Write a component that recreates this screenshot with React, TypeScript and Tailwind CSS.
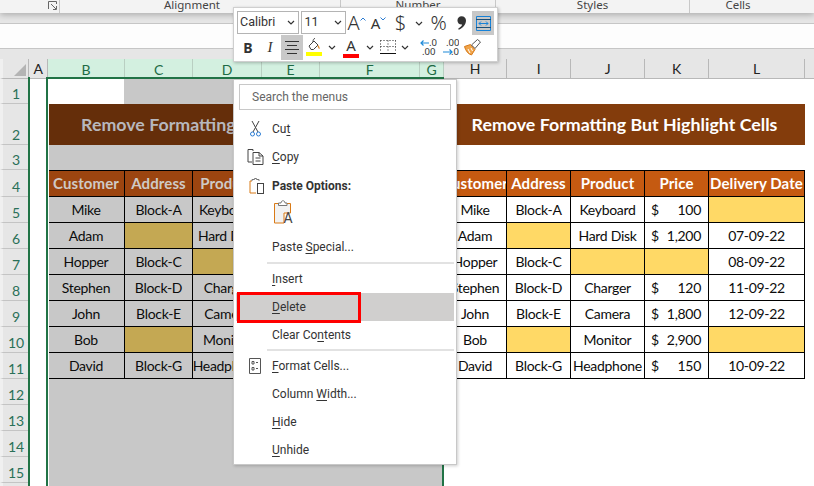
import type { ReactNode } from 'react';

const columns = ['B', 'C', 'D', 'E', 'F', 'G'];
const rightColumns = ['H', 'I', 'J', 'K', 'L'];
const rowNumbers = Array.from({ length: 16 }, (_, i) => i + 1);
const headers = ['Customer', 'Address', 'Product', 'Price', 'Delivery Date'];
const data = [
  ['Mike', 'Block-A', 'Keyboard', '100', ''],
  ['Adam', '', 'Hard Disk', '1,200', '07-09-22'],
  ['Hopper', 'Block-C', '', '', '08-09-22'],
  ['Stephen', 'Block-D', 'Charger', '120', '11-09-22'],
  ['John', 'Block-E', 'Camera', '1,800', '12-09-22'],
  ['Bob', '', 'Monitor', '2,900', ''],
  ['David', 'Block-G', 'Headphone', '150', '10-09-22'],
];

function Launcher() {
  return (
    <svg width="9" height="9" viewBox="0 0 9 9" fill="none" stroke="#666" strokeWidth="1" className="shrink-0">
      <path d="M0.5 8V0.5H8.5V3M5 8.5H8.5V5M3 3L8 8" />
    </svg>
  );
}

function Ribbon() {
  return (
    <div className="relative z-10 flex h-[13px] shrink-0 overflow-hidden bg-[#f3f3f3] text-[11.5px] leading-[10px] text-[#444] shadow-[0_2px_6px_rgba(0,0,0,0.25)]">
      <div className="flex w-[60px] items-start justify-end gap-[3px] border-r border-[#c8c8c8] pr-[2px] pt-px">
        <Launcher />
      </div>
      <div className="flex w-[281px] justify-center border-r border-[#c8c8c8] pr-[16px]">Alignment</div>
      <div className="flex w-[155px] justify-center border-r border-[#c8c8c8]">Number</div>
      <div className="flex w-[194px] justify-center border-r border-[#c8c8c8]">Styles</div>
      <div className="flex flex-1 justify-center pr-[28px]">Cells</div>
    </div>
  );
}

function Cell({ children, dim, fill, head, className = '' }: { children?: ReactNode; dim?: boolean; fill?: boolean; head?: boolean; className?: string }) {
  let bg = dim ? 'bg-[#c8c8c8] text-[#0c0c0c]' : 'bg-white text-[#0c0c0c]';
  if (fill) bg = dim ? 'bg-[#c4a853]' : 'bg-[#ffd966]';
  if (head) bg = dim ? 'bg-[#9c4510] text-[#cfcac6] font-bold text-[15px] tracking-[0.1px]' : 'bg-[#c55a11] text-white font-bold text-[15px] tracking-[0.1px]';
  return (
    <div className={`flex items-center justify-center overflow-hidden whitespace-nowrap border-b border-r border-black ${bg} ${className}`}>
      {children}
    </div>
  );
}

function TableHead({ dim }: { dim?: boolean }) {
  return (
    <>
      {headers.map((h) => (
        <Cell key={h} head dim={dim} className="border-t">
          {h}
        </Cell>
      ))}
    </>
  );
}

function TableRow({ row, dim }: { row: string[]; dim?: boolean }) {
  return (
    <>
      {row.map((value, i) =>
        i === 3 && value ? (
          <Cell key={i} dim={dim} className="!justify-between pl-[6px] pr-[7px]">
            <span>$</span>
            <span>{value}</span>
          </Cell>
        ) : (
          <Cell key={i} dim={dim} fill={!value}>
            {value}
          </Cell>
        ),
      )}
    </>
  );
}

function Sheet() {
  return (
    <div className="grid grid-cols-[29px_19px_77px_68px_69px_58px_100px_24px_63px_64px_74px_64px_96px_9px] grid-rows-[20px_25px_41px_25px_27px_repeat(12,26px)] font-['Lato',sans-serif] text-[14px] tracking-[-0.3px]">
      {/* Column headers */}
      <div className="relative border-b border-r border-[#b8b8b8] border-l-[3px] border-l-[#f0f0f0] bg-[#e6e6e6]">
        <svg width="12" height="12" viewBox="0 0 12 12" className="absolute left-[11px] top-[5px]">
          <path d="M12 0V12H0Z" fill="#b4b4b4" />
        </svg>
      </div>
      <div className="flex items-center justify-center border-b border-r border-[#b8b8b8] bg-[#e6e6e6] text-[14px] text-[#222]">A</div>
      {columns.map((c) => (
        <div key={c} className="flex items-center justify-center border-r border-[#b9cfc2] bg-[#d3f0e0] text-[14px] text-[#1d6b45]">
          {c}
        </div>
      ))}
      {rightColumns.map((c) => (
        <div key={c} className="flex items-center justify-center border-b border-r border-[#b8b8b8] bg-[#e6e6e6] text-[14px] text-[#222]">
          {c}
        </div>
      ))}
      <div className="border-b border-[#b8b8b8] bg-[#e6e6e6]" />

      {rowNumbers.map((n) => {
        const row = data[n - 5];
        return (
          <div key={n} className="contents">
            <div className="flex items-end justify-center border-b border-[#c4c4c4] border-l-[3px] border-l-[#f0f0f0] bg-[#e6e6e6] text-[14px] leading-[18px] tracking-normal text-[#2a7058]">
              {n}
            </div>
            <div className="bg-white" />
            {n === 1 && (
              <>
                <div className="border-r border-[#c8c8c8] bg-white" />
                <div className="col-span-5 bg-[#c8c8c8]" />
                <div className="col-span-5 bg-white" />
              </>
            )}
            {n === 2 && (
              <>
                <div className="col-span-5 flex items-center justify-center whitespace-nowrap bg-[#652e0a] text-[17.8px] font-bold tracking-normal text-[#b7b7bd]">
                  Remove Formatting But Highlight Cells
                </div>
                <div className="bg-[#c8c8c8]" />
                <div className="col-span-5 flex items-center justify-center whitespace-nowrap bg-[#833c0c] text-[17.8px] font-bold tracking-normal text-white">
                  Remove Formatting But Highlight Cells
                </div>
              </>
            )}
            {n === 3 && (
              <>
                <div className="col-span-6 bg-[#c8c8c8]" />
                <div className="col-span-5 bg-white" />
              </>
            )}
            {n === 4 && (
              <>
                <TableHead dim />
                <div className="bg-[#c8c8c8]" />
                <TableHead />
              </>
            )}
            {row && (
              <>
                <TableRow row={row} dim />
                <div className="bg-[#c8c8c8]" />
                <TableRow row={row} />
              </>
            )}
            {n > 11 && (
              <>
                <div className="col-span-6 bg-[#c8c8c8]" />
                <div className="col-span-5 bg-white" />
              </>
            )}
            <div className="bg-white" />
          </div>
        );
      })}
    </div>
  );
}

function Chevron() {
  return (
    <svg width="8" height="5" viewBox="0 0 8 5" fill="none" stroke="#333" strokeWidth="1.2" className="shrink-0">
      <path d="M1 1L4 4L7 1" />
    </svg>
  );
}

function Tool({ className, children }: { className: string; children?: ReactNode }) {
  return <div className={`flex h-full shrink-0 items-center justify-center ${className}`}>{children}</div>;
}

function MiniToolbar() {
  return (
    <div className="absolute left-[233px] top-[7px] z-30 h-[55px] w-[265px] border border-[#cfcfcf] bg-white p-[3px] text-[#333] shadow-[1px_1px_3px_rgba(0,0,0,0.25)]">
      <div className="flex h-[24px]">
        <div className="flex h-[23px] w-[63px] items-center justify-between border border-[#b4b4b4] pl-[2px] pr-[3px] font-['Roboto',sans-serif] text-[12.5px]">
          Calibri
          <Chevron />
        </div>
        <div className="ml-[2px] flex h-[23px] w-[45px] items-center justify-between border border-[#b4b4b4] pl-[2px] pr-[3px] font-['Roboto',sans-serif] text-[12.5px]">
          11
          <Chevron />
        </div>
        <Tool className="w-[21px] text-[20px] font-light">
          A
          <svg width="6" height="4" viewBox="0 0 6 4" fill="none" stroke="#2b7cd3" strokeWidth="1" className="mb-[9px]">
            <path d="M0.5 3.5L3 1L5.5 3.5" />
          </svg>
        </Tool>
        <Tool className="w-[23px] text-[15px]">
          A
          <svg width="6" height="4" viewBox="0 0 6 4" fill="none" stroke="#2b7cd3" strokeWidth="1" className="mb-[8px]">
            <path d="M0.5 0.5L3 3L5.5 0.5" />
          </svg>
        </Tool>
        <Tool className="w-[21px] text-[20px] font-light">$</Tool>
        <Tool className="w-[15px]">
          <Chevron />
        </Tool>
        <Tool className="w-[25px] text-[20px] font-light">%</Tool>
        <Tool className="w-[21px]">
          <svg width="9" height="14" viewBox="0 0 8 12" fill="#333">
            <path d="M4 0C6.4 0 8 1.6 8 3.8C8 7 5.6 10.4 1.6 12L1 11C3.2 9.8 4.4 8.6 4.6 7.4C2 7.6 0.4 6 0.4 3.8C0.4 1.6 2 0 4 0Z" />
          </svg>
        </Tool>
        <Tool className="h-[24px] w-[22px] bg-[#c8c8c8]">
          <svg width="15" height="15" viewBox="0 0 15 15" fill="none" stroke="#1782d8" strokeWidth="1">
            <path d="M0.5 0.5H14.5V14.5H0.5Z" />
            <path d="M0 3.5H15M0 11.5H15" stroke="#1a4f7a" />
            <path d="M3 7.5H12M5 5.5L3 7.5L5 9.5M10 5.5L12 7.5L10 9.5" />
          </svg>
        </Tool>
      </div>
      <div className="flex h-[25px]">
        <Tool className="w-[22px] text-[14px] font-bold">B</Tool>
        <Tool className="w-[22px] font-['Liberation_Serif',serif] text-[15px] italic">I</Tool>
        <Tool className="w-[22px] bg-[#c8c8c8]">
          <svg width="14" height="13" viewBox="0 0 14 13" fill="none" stroke="#333" strokeWidth="1">
            <path d="M0 0.5H14M2 4.5H12M0 8.5H14M2 12.5H12" />
          </svg>
        </Tool>
        <Tool className="w-[22px]">
          <svg width="16" height="19" viewBox="0 0 16 19">
            <path d="M3 8L8 3L12 7L7.5 11.5H5Z" fill="none" stroke="#444" />
            <path d="M9 0.5C7.5 0.5 7 2 7 4" fill="none" stroke="#444" />
            <path d="M12 7C13.5 8.5 14 10 13.5 11C12.5 11 12 9.5 11.5 8Z" fill="#e08a2c" />
            <rect x="0" y="14" width="16" height="4" fill="#ffff00" />
          </svg>
        </Tool>
        <Tool className="w-[13px]">
          <Chevron />
        </Tool>
        <Tool className="w-[26px]">
          <div className="flex flex-col items-center text-[15px] leading-[15px]">
            A<div className="mt-px h-[4px] w-[16px] bg-[#ff0000]" />
          </div>
        </Tool>
        <Tool className="w-[11px]">
          <Chevron />
        </Tool>
        <Tool className="w-[26px]">
          <svg width="16" height="15" viewBox="0 0 16 15" fill="none" stroke="#222" strokeWidth="1" strokeDasharray="1 2">
            <path d="M0.5 0.5H16M0.5 6.5H16M0.5 0.5V12M8 0.5V12M15.5 0.5V12" />
            <path d="M0 13.5H16" stroke="#111" strokeDasharray="none" />
          </svg>
        </Tool>
        <Tool className="w-[8px]">
          <Chevron />
        </Tool>
        <Tool className="ml-[8px] w-[22px]">
          <svg width="17" height="17" viewBox="0 0 17 17" fill="none" stroke="#1f8ad8" strokeWidth="1.2">
            <path d="M9 4H1M3.5 1.5L1 4L3.5 6.5" />
            <text x="9" y="7" fontSize="9.5" fill="#333" stroke="none">.0</text>
            <text x="2" y="16" fontSize="9.5" fill="#333" stroke="none">.00</text>
          </svg>
        </Tool>
        <Tool className="w-[22px]">
          <svg width="17" height="17" viewBox="0 0 17 17" fill="none" stroke="#1f8ad8" strokeWidth="1.2">
            <path d="M1 13H10M7.5 10.5L10 13L7.5 15.5" />
            <text x="4" y="7" fontSize="9.5" fill="#333" stroke="none">.00</text>
            <text x="9" y="16" fontSize="9.5" fill="#333" stroke="none">.0</text>
          </svg>
        </Tool>
        <Tool className="w-[22px]">
          <svg width="17" height="17" viewBox="0 0 17 17">
            <path d="M0.5 7.5L6.5 5.5L11 10.5L7.5 16C4 15 1.5 11.5 0.5 7.5Z" fill="#f0a44a" stroke="#d77a1a" />
            <path d="M4 10L6 14M7 9L8.5 12" stroke="#fff" fill="none" />
            <path d="M7.5 6L13.5 0.5L16.5 3L11 9.5Z" fill="#fff" stroke="#555" />
          </svg>
        </Tool>
      </div>
    </div>
  );
}

function MenuItem({ pre = '', mark, post = '', icon, hover }: { pre?: string; mark: string; post?: string; icon?: ReactNode; hover?: boolean }) {
  return (
    <div className={`flex h-[28px] shrink-0 items-center ${hover ? 'bg-[#d0cfce]' : ''}`}>
      <div className="flex w-[36px] shrink-0 justify-center pl-[2px]">{icon}</div>
      <span>
        {pre}
        <u className="underline-offset-2">{mark}</u>
        {post}
      </span>
    </div>
  );
}

function ContextMenu() {
  return (
    <div className="absolute left-[233px] top-[79px] z-20 flex h-[386px] w-[224px] flex-col border border-[#c8c8c8] bg-white px-[2px] font-['Roboto',sans-serif] text-[12px] text-[#333] shadow-[1px_1px_3px_rgba(0,0,0,0.2)]">
      <div className="mx-[3px] mb-[5px] mt-[4px] flex h-[26px] shrink-0 items-center border border-[#c8c8c8] pl-[12px] text-[#666]">Search the menus</div>
      <MenuItem
        pre="Cu"
        mark="t"
        icon={
          <svg width="11" height="16" viewBox="0 0 11 16" fill="none" stroke="#444" strokeWidth="1">
            <path d="M2 0L8 11M9 0L3 11" />
            <circle cx="2.5" cy="13" r="2" stroke="#2b7cd3" />
            <circle cx="8.5" cy="13" r="2" stroke="#2b7cd3" />
          </svg>
        }
      />
      <MenuItem
        mark="C"
        post="opy"
        icon={
          <svg width="17" height="16" viewBox="0 0 17 16" fill="none" stroke="#444" strokeWidth="1">
            <path d="M6 2V0.5H1V13H5" />
            <path d="M6 3.5H12L16 7V15.5H6ZM12 3.5V7H16M8.5 9H13.5M8.5 12H13.5" />
          </svg>
        }
      />
      <div className="flex h-[29px] shrink-0 items-center">
        <div className="flex w-[36px] shrink-0 justify-center pl-[4px]">
          <svg width="15" height="16" viewBox="0 0 15 16" fill="none" stroke="#d97a16" strokeWidth="1">
            <path d="M3 3H1V15H7" />
            <path d="M3 3V1.5H5.5V0.5H7.5V1.5H10V3" stroke="#777" />
            <rect x="8.5" y="5.5" width="6" height="10" stroke="#444" />
          </svg>
        </div>
        <span className="font-bold">Paste Options:</span>
      </div>
      <div className="flex h-[33px] shrink-0 items-start pl-[38px]">
        <svg width="20" height="24" viewBox="0 0 20 24" fill="none" stroke="#d97a16" strokeWidth="1">
          <path d="M0.5 3.5H16.5V13H10V23H0.5Z" fill="#f2f2f2" />
          <path d="M4.5 5.5V3H7C7 0 11 0 11 3H13V5.5Z" stroke="#777" fill="#fff" />
          <text x="9.5" y="23" fontSize="14" fill="#444" stroke="none">A</text>
        </svg>
      </div>
      <MenuItem pre="Paste " mark="S" post="pecial..." />
      <div className="my-px ml-[31px] h-[2px] shrink-0 bg-[#e2e2e2]" />
      <MenuItem mark="I" post="nsert" />
      <MenuItem mark="D" post="elete" hover />
      <MenuItem pre="Clear Co" mark="n" post="tents" />
      <div className="mb-px ml-[31px] h-[2px] shrink-0 bg-[#e2e2e2]" />
      <MenuItem
        mark="F"
        post="ormat Cells..."
        icon={
          <svg width="12" height="16" viewBox="0 0 12 16" fill="none" stroke="#555" strokeWidth="1">
            <path d="M0.5 0.5H11.5V15.5H0.5ZM7 4.5H9M7 10.5H9" />
            <path d="M3 3.5H5V6H3ZM3 9.5H5V12H3Z" />
          </svg>
        }
      />
      <MenuItem pre="Column " mark="W" post="idth..." />
      <MenuItem mark="H" post="ide" />
      <MenuItem mark="U" post="nhide" />
    </div>
  );
}

export default function App() {
  return (
    <div className="relative flex h-[486px] w-[814px] flex-col overflow-hidden bg-[#e6e6e6] font-['Noto_Sans',sans-serif]">
      <Ribbon />
      <div className="mt-[10px] h-[26px] shrink-0 border-y border-[#c6c6c6] bg-[#fdfdfd]" />
      <div className="h-[10px] shrink-0" />
      <Sheet />

      {/* Selection outline */}
      <div className="absolute bottom-[-4px] left-[46px] top-[77px] z-10 w-[398px] border-2 border-[#217346] shadow-[inset_1px_0_0_#fff]" />
      <div className="absolute bottom-0 left-[28px] top-[77px] z-10 w-[2px] bg-[#217346]" />

      <MiniToolbar />
      <ContextMenu />

      {/* Red callout around Delete */}
      <div className="absolute left-[237px] top-[292px] z-40 h-[31px] w-[124px] border-[3px] border-[#ff0000]" />
    </div>
  );
}
